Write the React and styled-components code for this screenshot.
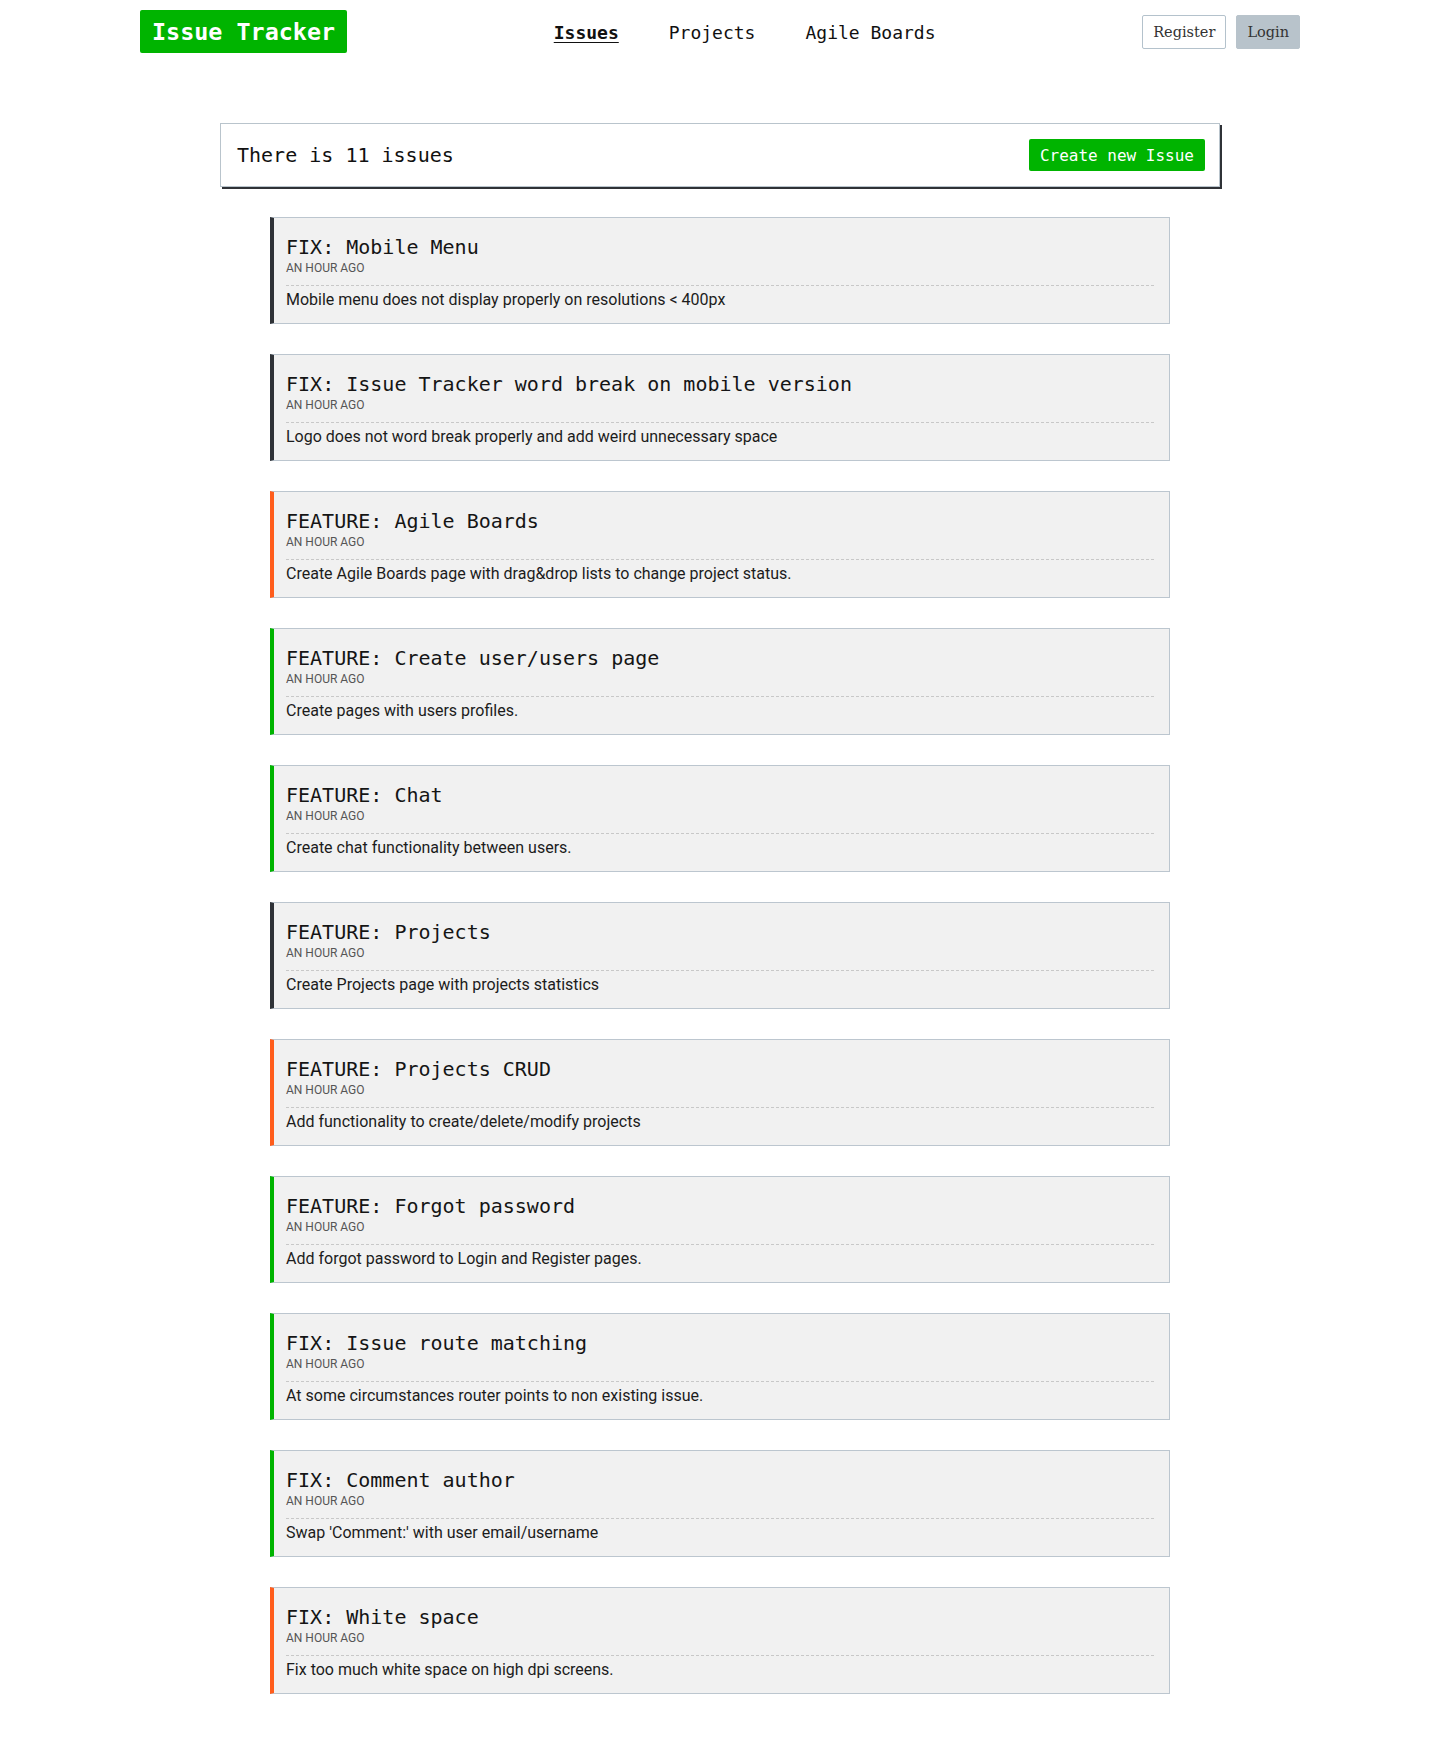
import React from "react";
import styled, { createGlobalStyle } from "styled-components";

const GlobalStyle = createGlobalStyle`
  body {
    margin: 0;
    background: #ffffff;
    font-family: Roboto, "Noto Sans", sans-serif;
    color: #222;
  }
  * {
    box-sizing: border-box;
  }
`;

const issues = [
  { type: "FIX", title: "Mobile Menu", text: "Mobile menu does not display properly on resolutions < 400px", status: "dark" },
  { type: "FIX", title: "Issue Tracker word break on mobile version", text: "Logo does not word break properly and add weird unnecessary space", status: "dark" },
  { type: "FEATURE", title: "Agile Boards", text: "Create Agile Boards page with drag&drop lists to change project status.", status: "orange" },
  { type: "FEATURE", title: "Create user/users page", text: "Create pages with users profiles.", status: "green" },
  { type: "FEATURE", title: "Chat", text: "Create chat functionality between users.", status: "green" },
  { type: "FEATURE", title: "Projects", text: "Create Projects page with projects statistics", status: "dark" },
  { type: "FEATURE", title: "Projects CRUD", text: "Add functionality to create/delete/modify projects", status: "orange" },
  { type: "FEATURE", title: "Forgot password", text: "Add forgot password to Login and Register pages.", status: "green" },
  { type: "FIX", title: "Issue route matching", text: "At some circumstances router points to non existing issue.", status: "green" },
  { type: "FIX", title: "Comment author", text: "Swap 'Comment:' with user email/username", status: "green" },
  { type: "FIX", title: "White space", text: "Fix too much white space on high dpi screens.", status: "orange" },
];

const statusColors = {
  dark: "#2f3237",
  orange: "#ff5d1c",
  green: "#00b400",
};

const App = () => {
  return (
    <Page>
      <GlobalStyle />
      <Header>
        <Logo>Issue Tracker</Logo>
        <Nav>
          <NavLink $active>Issues</NavLink>
          <NavLink>Projects</NavLink>
          <NavLink>Agile Boards</NavLink>
        </Nav>
        <Auth>
          <AuthButton>Register</AuthButton>
          <AuthButton $filled>Login</AuthButton>
        </Auth>
      </Header>

      <Main>
        <CountBar>
          <span>There is {issues.length} issues</span>
          <CreateButton>Create new Issue</CreateButton>
        </CountBar>

        <IssueList>
          {issues.map((issue, i) => (
            <IssueCard key={i} $status={issue.status}>
              <IssueTitle>
                {issue.type}: {issue.title}
              </IssueTitle>
              <IssueTime>AN HOUR AGO</IssueTime>
              <IssueText>{issue.text}</IssueText>
            </IssueCard>
          ))}
        </IssueList>
      </Main>
    </Page>
  );
};

export default App;

const Page = styled.div`
  width: 100%;
  padding: 10px 140px 50px;
`;

const Header = styled.header`
  display: flex;
  justify-content: space-between;
  align-items: center;
  height: 43px;
`;

const Logo = styled.div`
  background: #00b400;
  color: #ffffff;
  font-family: "DejaVu Sans Mono", monospace;
  font-weight: 700;
  font-size: 23.4px;
  height: 43px;
  padding: 0 12px;
  display: flex;
  align-items: center;
  border-radius: 2px;
`;

const Nav = styled.nav`
  display: flex;
  gap: 50px;
  font-family: "DejaVu Sans Mono", monospace;
  font-size: 18px;
  padding-top: 1px;
`;

const NavLink = styled.a`
  color: #111;
  cursor: pointer;
  font-weight: ${(p) => (p.$active ? 700 : 400)};
  text-decoration: ${(p) => (p.$active ? "underline" : "none")};
  text-underline-offset: 3px;
`;

const Auth = styled.div`
  display: flex;
  gap: 10px;
  align-items: center;
`;

const AuthButton = styled.button`
  font-family: "DejaVu Serif", serif;
  font-size: 14.5px;
  color: #333;
  height: 34px;
  padding: 0 10px;
  border-radius: 2px;
  background: ${(p) => (p.$filled ? "#b8c3cb" : "#ffffff")};
  border: 1px solid ${(p) => (p.$filled ? "#b8c3cb" : "#b4c2cc")};
  cursor: pointer;
`;

const Main = styled.main`
  display: flex;
  flex-direction: column;
  align-items: center;
  margin-top: 70px;
`;

const CountBar = styled.div`
  width: 1000px;
  height: 64px;
  display: flex;
  justify-content: space-between;
  align-items: center;
  padding: 0 14px 0 16px;
  border: 1px solid #b9c4cc;
  box-shadow: 2px 2px 0 #2f3237;
  font-family: "DejaVu Sans Mono", monospace;
  font-size: 20px;
  color: #111;
`;

const CreateButton = styled.button`
  background: #00b400;
  color: #ffffff;
  border: none;
  border-radius: 2px;
  height: 32px;
  padding: 0 11px;
  font-family: "DejaVu Sans Mono", monospace;
  font-size: 16px;
  cursor: pointer;
`;

const IssueList = styled.div`
  width: 900px;
  margin-top: 30px;
  display: flex;
  flex-direction: column;
  gap: 30px;
`;

const IssueCard = styled.div`
  background: #f1f1f1;
  border: 1px solid #bcc6cf;
  border-left: 4px solid ${(p) => statusColors[p.$status]};
  padding: 17px 15px 13px 12px;
`;

const IssueTitle = styled.h3`
  margin: 0;
  font-family: "DejaVu Sans Mono", monospace;
  font-weight: 400;
  font-size: 20px;
  line-height: 24px;
  color: #151515;
`;

const IssueTime = styled.div`
  margin-top: 2px;
  font-size: 12px;
  line-height: 14px;
  color: #555;
  padding-bottom: 10px;
  border-bottom: 1px dashed #c8c8c8;
`;

const IssueText = styled.p`
  margin: 4px 0 0;
  font-size: 16px;
  line-height: 20px;
  color: #1c1c1c;
`;
